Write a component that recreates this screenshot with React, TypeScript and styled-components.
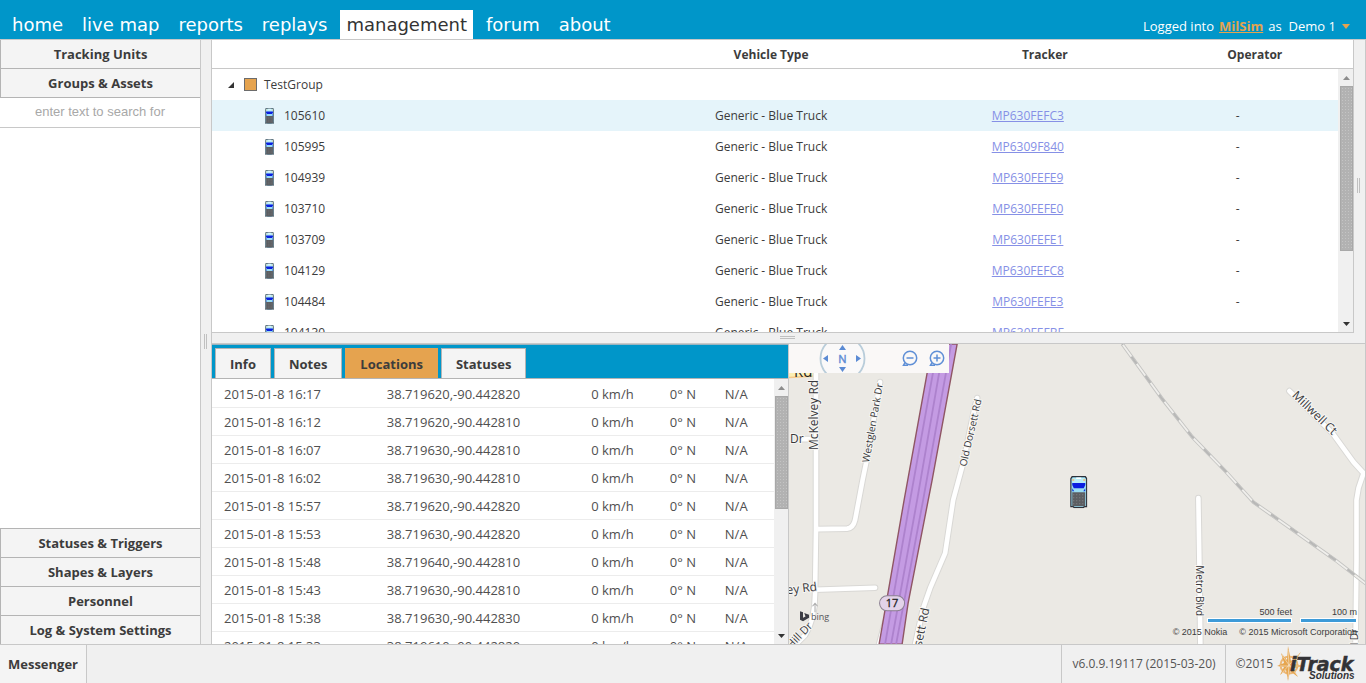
import React from "react";
import styled, { createGlobalStyle, css } from "styled-components";

const SANS = '"Open Sans", "Noto Sans", sans-serif';
const BLUE = "#0096c9";
const ORANGE = "#e5a34f";
const LINE = "#c8c8c8";
const INK = "#3c3c3c";

const GlobalStyle = createGlobalStyle`
  *, *::before, *::after { box-sizing: border-box; }
  body {
    margin: 0;
    background: #f0f0f0;
    color: ${INK};
    font: 12px/16px ${SANS};
  }
  button { font: inherit; color: inherit; cursor: pointer; }
`;

const Page = styled.div`
  display: grid;
  grid-template-rows: auto minmax(0, 1fr) auto;
  height: 100vh;
`;

/* ---------- top bar ---------- */

const TopBar = styled.header`
  display: flex;
  justify-content: space-between;
  align-items: flex-end;
  height: 40px;
  padding: 0 16px 0 6px;
  background: ${BLUE};
  border-bottom: 1px solid ${LINE};
`;

const Nav = styled.nav`
  display: flex;
  gap: 7px;
`;

const NavLink = styled.a<{ $active?: boolean }>`
  height: 29px;
  padding: 0 6px;
  font: 18px/29px "DejaVu Sans", Verdana, sans-serif;
  text-decoration: none;
  color: ${(p) => (p.$active ? "#333" : "#fff")};
  background: ${(p) => (p.$active ? "#fff" : "transparent")};
`;

const Account = styled.div`
  display: flex;
  align-items: center;
  gap: 5px;
  height: 26px;
  font-size: 13px;
  color: #fff;
`;

const AccountLink = styled.a`
  color: ${ORANGE};
  font-weight: 700;
`;

const UserMenu = styled.button`
  display: flex;
  align-items: center;
  gap: 6px;
  padding: 0 0 0 2px;
  border: 0;
  background: none;
  color: #fff;
`;

/* ---------- frame ---------- */

const Main = styled.main`
  display: grid;
  grid-template-columns: 201px 10px minmax(0, 1fr);
  min-height: 0;
`;

const Sidebar = styled.aside`
  display: flex;
  flex-direction: column;
  min-height: 0;
  background: #fff;
  border-right: 1px solid ${LINE};
`;

const SectionButton = styled.button<{ $line: "top" | "bottom" }>`
  height: 29px;
  padding: 0;
  border: 0 solid #b4b4b4;
  border-left-width: 1px;
  ${(p) => (p.$line === "top" ? "border-top-width: 1px;" : "border-bottom-width: 1px;")}
  background: #f4f4f4;
  font-weight: 700;
  font-size: 13px;
`;

const SearchBox = styled.input`
  width: 100%;
  height: 30px;
  padding: 0 0 2px;
  border: 0;
  border-bottom: 1px solid ${LINE};
  text-align: center;
  font: 13px "Liberation Sans", Arial, sans-serif;
  &::placeholder { color: #a8a8a8; opacity: 1; }
`;

const Spacer = styled.div`
  flex: 1;
`;

const Splitter = styled.div<{ $vertical?: boolean }>`
  display: flex;
  align-items: center;
  justify-content: center;
  padding: 0 2px 2px 0;
  background: #f0f0f0;
  &::before {
    content: "";
    border: 0 solid #c0c0c0;
    ${(p) =>
      p.$vertical
        ? css`width: 3px; height: 15px; border-width: 0 1px;`
        : css`width: 15px; height: 3px; border-width: 1px 0;`}
  }
`;

const Content = styled.div`
  display: grid;
  grid-template-rows: minmax(0, 293fr) 10px minmax(0, 301fr);
  min-height: 0;
  border: solid ${LINE};
  border-width: 0 1px;
`;

const TopPane = styled.div`
  display: grid;
  grid-template-columns: minmax(0, 1fr) 11px;
  min-height: 0;
`;

const BottomPane = styled.div`
  display: grid;
  grid-template-columns: minmax(0, 1fr) minmax(0, 1fr);
  min-height: 0;
  border-top: 1px solid ${LINE};
`;

/* ---------- scrollbar ---------- */

const Track = styled.div`
  display: flex;
  flex-direction: column;
  align-items: flex-end;
  background: #f0f0f0;
  min-height: 0;
`;

const Arrow = styled.button`
  display: grid;
  place-items: center;
  flex: none;
  width: 13px;
  height: 17px;
  padding: 0;
  border: 0;
  background: none;
`;

const ThumbArea = styled.div`
  flex: 1;
  width: 13px;
  min-height: 0;
`;

const Thumb = styled.div<{ $size: number }>`
  height: ${(p) => p.$size}%;
  background: radial-gradient(circle, #c4c4c4 1px, transparent 1px) 0 0 / 3px 3px #b2b2b2;
  border: 1px solid #a8a8a8;
`;

function ScrollBar({ size }: { size: number }) {
  return (
    <Track>
      <Arrow aria-label="Scroll up">
        <svg width="7" height="4"><path d="M0 4L3.5 0L7 4Z" fill="#8c8c8c" /></svg>
      </Arrow>
      <ThumbArea><Thumb $size={size} /></ThumbArea>
      <Arrow aria-label="Scroll down">
        <svg width="7" height="4"><path d="M0 0L3.5 4L7 0Z" fill="#333" /></svg>
      </Arrow>
    </Track>
  );
}

/* ---------- asset tree ---------- */

const TreePanel = styled.section`
  display: grid;
  grid-template-columns: minmax(0, 1fr) 15px;
  min-height: 0;
  background: #fff;
  border: solid ${LINE};
  border-width: 0 1px 1px 0;
`;

const TreeScroll = styled.div`
  overflow: hidden;
  min-height: 0;
`;

const TreeSide = styled.div`
  display: grid;
  grid-template-rows: 29px minmax(0, 1fr);
  min-height: 0;
  &::before {
    content: "";
    border-bottom: 1px solid ${LINE};
  }
`;

const TreeTable = styled.table`
  width: 100%;
  table-layout: fixed;
  border-collapse: separate;
  border-spacing: 0;
`;

const TreeHead = styled.th<{ $shift?: boolean }>`
  height: 29px;
  padding: 2px 0 0 ${(p) => (p.$shift ? 34 : 0)}px;
  border-bottom: 1px solid ${LINE};
  font-weight: 700;
`;

const TreeRow = styled.tr<{ $selected?: boolean }>`
  background: ${(p) => (p.$selected ? "#e5f4fa" : "#fff")};
`;

const TreeCell = styled.td`
  height: 31px;
  padding: 0;
  text-align: center;
`;

const NodeLabel = styled.div<{ $level: number }>`
  display: flex;
  align-items: center;
  gap: ${(p) => (p.$level ? 10 : 7)}px;
  padding-left: ${(p) => (p.$level ? 53 : 16)}px;
`;

const Expander = styled.button`
  display: flex;
  padding: 0 3px 0 0;
  border: 0;
  background: none;
`;

const Swatch = styled.span`
  width: 13px;
  height: 13px;
  background: ${ORANGE};
  border: 1px solid #6c6c6c;
`;

const TrackerLink = styled.a`
  color: #8690e6;
`;

function Truck({ width, height }: { width: number; height: number }) {
  return (
    <svg width={width} height={height} viewBox="0 0 17 32" preserveAspectRatio="none">
      <path d="M2 .5H15L16.5 2.5V30.5H14L13 31.5H4L3 30.5H.5V2.5Z" fill="#9adcf2" stroke="#2e3038" strokeWidth="1.4" />
      <path d="M3 2H14L15 4V7H2V4Z" fill="#b8edf8" />
      <path d="M6 1.5H11V3H6Z" fill="#fff" />
      <path d="M2 3H4V5H2ZM13 3H15V5H13Z" fill="#e8c48c" />
      <path d="M2 7H15V9L13.500 12H3.500L2 9Z" fill="#0a1ee0" />
      <path d="M2 12L4 15H2ZM15 12L13 15H15Z" fill="#1238d8" />
      <path d="M2 16H15V30H2Z" fill="#5c5e62" />
      <path d="M3 18.500H14M3 21.500H14M3 24.500H14M3 27.500H14" stroke="#85878b" strokeDasharray="1 2" />
    </svg>
  );
}

const assets = [
  ["105610", "MP630FEFC3"],
  ["105995", "MP6309F840"],
  ["104939", "MP630FEFE9"],
  ["103710", "MP630FEFE0"],
  ["103709", "MP630FEFE1"],
  ["104129", "MP630FEFC8"],
  ["104484", "MP630FEFE3"],
  ["104130", "MP630FEFBF"],
];

function AssetTree() {
  return (
    <TreePanel>
      <TreeScroll>
        <TreeTable>
          <colgroup>
            <col />
            <col style={{ width: "26.100%" }} />
            <col style={{ width: "19.500%" }} />
            <col style={{ width: "17.800%" }} />
          </colgroup>
          <thead>
            <tr>
              <TreeHead aria-label="Name" />
              <TreeHead>Vehicle Type</TreeHead>
              <TreeHead $shift>Tracker</TreeHead>
              <TreeHead $shift>Operator</TreeHead>
            </tr>
          </thead>
          <tbody>
            <TreeRow>
              <TreeCell colSpan={4}>
                <NodeLabel $level={0}>
                  <Expander aria-label="Collapse TestGroup">
                    <svg width="6" height="6"><path d="M6 0V6H0Z" fill="#333" /></svg>
                  </Expander>
                  <Swatch />
                  TestGroup
                </NodeLabel>
              </TreeCell>
            </TreeRow>
            {assets.map(([name, tracker], i) => (
              <TreeRow key={name} $selected={i === 0}>
                <TreeCell>
                  <NodeLabel $level={1}>
                    <Truck width={9} height={16} />
                    {name}
                  </NodeLabel>
                </TreeCell>
                <TreeCell>Generic - Blue Truck</TreeCell>
                <TreeCell><TrackerLink href="#tracker">{tracker}</TrackerLink></TreeCell>
                <TreeCell>-</TreeCell>
              </TreeRow>
            ))}
          </tbody>
        </TreeTable>
      </TreeScroll>
      <TreeSide>
        <ScrollBar size={72} />
      </TreeSide>
    </TreePanel>
  );
}

/* ---------- locations ---------- */

const DetailPanel = styled.section`
  display: grid;
  grid-template-rows: auto minmax(0, 1fr);
  min-height: 0;
  background: #fff;
  border-right: 1px solid ${LINE};
`;

const Tabs = styled.div`
  display: flex;
  align-items: flex-end;
  gap: 3px;
  height: 35px;
  padding-left: 3px;
  background: ${BLUE};
  border-top: 1px solid #9ab4c0;
  border-bottom: 1px solid #b4b4b4;
`;

const Tab = styled.button<{ $active?: boolean }>`
  height: 30px;
  padding: 0 14px;
  border: 1px solid ${(p) => (p.$active ? ORANGE : "#b4b4b4")};
  border-bottom: 0;
  background: ${(p) => (p.$active ? ORANGE : "#f4f4f4")};
  font-size: 13px;
  font-weight: 700;
`;

const LocationArea = styled.div`
  display: grid;
  grid-template-columns: minmax(0, 1fr) 14px;
  min-height: 0;
`;

const LocationScroll = styled.div`
  overflow: hidden;
`;

const LocationTable = styled.table`
  width: 100%;
  table-layout: fixed;
  border-collapse: collapse;
  color: #505050;
  font-size: 13px;
`;

const LocationCell = styled.td`
  height: 28px;
  padding: 2px 0 0 12px;
  border-bottom: 1px solid #ececec;
  white-space: nowrap;
`;

const locations = [
  ["16:17", "38.719620,-90.442820"],
  ["16:12", "38.719620,-90.442810"],
  ["16:07", "38.719630,-90.442810"],
  ["16:02", "38.719630,-90.442810"],
  ["15:57", "38.719620,-90.442820"],
  ["15:53", "38.719630,-90.442820"],
  ["15:48", "38.719640,-90.442810"],
  ["15:43", "38.719630,-90.442810"],
  ["15:38", "38.719630,-90.442830"],
  ["15:33", "38.719610,-90.442820"],
];

function Locations() {
  return (
    <DetailPanel>
      <Tabs role="tablist">
        <Tab role="tab">Info</Tab>
        <Tab role="tab">Notes</Tab>
        <Tab role="tab" aria-selected $active>Locations</Tab>
        <Tab role="tab">Statuses</Tab>
      </Tabs>
      <LocationArea>
        <LocationScroll>
          <LocationTable>
            <colgroup>
              <col style={{ width: "29%" }} />
              <col style={{ width: "36.400%" }} />
              <col style={{ width: "14%" }} />
              <col style={{ width: "9.800%" }} />
              <col />
            </colgroup>
            <tbody>
              {locations.map(([time, place]) => (
                <tr key={time}>
                  <LocationCell>2015-01-8 {time}</LocationCell>
                  <LocationCell>{place}</LocationCell>
                  <LocationCell>0 km/h</LocationCell>
                  <LocationCell>0° N</LocationCell>
                  <LocationCell>N/A</LocationCell>
                </tr>
              ))}
            </tbody>
          </LocationTable>
        </LocationScroll>
        <ScrollBar size={49} />
      </LocationArea>
    </DetailPanel>
  );
}

/* ---------- map ---------- */

const MapPanel = styled.section`
  position: relative;
  overflow: hidden;
  background: #ebe9e4;
`;

const MapDrawing = styled.svg`
  display: block;
  width: 100%;
  height: 100%;
  font-family: ${SANS};
`;

const MapTools = styled.div`
  position: absolute;
  top: 0;
  left: 0;
  width: 160px;
  height: 29px;
  overflow: hidden;
  background: #faf8f7;
`;

const MapCredits = styled.div`
  position: absolute;
  right: 8px;
  bottom: 6px;
  display: flex;
  flex-direction: column;
  align-items: flex-end;
  gap: 3px;
  font: 9px/12px "Liberation Sans", Arial, sans-serif;
`;

const Scales = styled.div`
  display: flex;
  gap: 8px;
`;

const Scale = styled.div<{ $width: number }>`
  width: ${(p) => p.$width}px;
  text-align: right;
  border-bottom: 5px solid #fff;
  position: relative;
  &::after {
    content: "";
    position: absolute;
    left: 1px;
    right: 1px;
    bottom: -4px;
    height: 3px;
    background: #3e9bd8;
  }
`;

const Notices = styled.div`
  display: flex;
  gap: 12px;
`;

const roads = [
  "M27 10L27 185L26 250Q26 275 16 291L5 302",
  "M28 185L58 184.500Q64 184 66 176L73.500 136L77 119L91 38",
  "M26 245.500L86 243.500",
  "M12 95L27 95",
  "M188 54L185 66L174 119L164 156L156 209L141 244L134 264L126 300",
  "M500 47L543 89L564 118L574 129L569 144L567 156L567 216L566 300",
  "M409 154L410 216L411 300",
  "M96 278L90 300",
];
const rail = "M333 0L373 55L403 93L436 127L464 158L501 184L546 216L577 240";

const halo = { stroke: "#f7f6f3", strokeWidth: 2, paintOrder: "stroke" as const, fill: "#38383c" };

function MapView() {
  return (
    <MapPanel>
      <MapDrawing viewBox="0 0 576 300" preserveAspectRatio="xMinYMin slice" role="img" aria-label="Road map">
        <rect width="576" height="300" fill="#ebe9e4" />
        <path d="M0 29H26V33L0 34Z" fill="#fbeeb4" />
        <path d="M0 33.500L26 32" stroke="#f5c98c" strokeWidth="1.500" />
        {roads.map((d) => (
          <path key={d} d={d} fill="none" stroke="#d9d8d5" strokeWidth="6.600" strokeLinecap="round" strokeLinejoin="round" />
        ))}
        {roads.map((d) => (
          <path key={d} d={d} fill="none" stroke="#fff" strokeWidth="4.600" strokeLinecap="round" strokeLinejoin="round" />
        ))}
        <path d={rail} fill="none" stroke="#c4c4c2" strokeWidth="3.600" />
        <path d={rail} fill="none" stroke="#f0efec" strokeWidth="1.800" />
        <path d={rail} fill="none" stroke="#b8b8b7" strokeWidth="2.200" strokeDasharray="9 14.500" strokeDashoffset="8" />
        <path d="M143 0L138 29L115 156L90 300H113L119 259L143 136L168 0Z" fill="#c49be3" stroke="#8f5664" strokeWidth="1.400" />
        <path d="M149 0L121 156L96 300M155 0L128 156L102 300M162 0L134 156L107 300" fill="none" stroke="#ad82cd" strokeWidth="1.800" />
        <text x="5" y="33" fontSize="15" fill="#222">Rd</text>
        <text transform="translate(29 106) rotate(-90)" fontSize="12" {...halo}>McKelvey Rd</text>
        <text transform="translate(80 119) rotate(-80)" fontSize="10" {...halo}>Westglen Park Dr</text>
        <text transform="translate(177 123) rotate(-77)" fontSize="10" {...halo}>Old Dorsett Rd</text>
        <text transform="translate(128 323) rotate(-78)" fontSize="12" {...halo}>Dorsett Rd</text>
        <text transform="translate(502 52) rotate(44)" fontSize="12" {...halo}>Millwell Ct</text>
        <text transform="translate(407 221) rotate(90)" fontSize="10" {...halo}>Metro Blvd</text>
        <text transform="translate(569 301) rotate(-90)" fontSize="10" {...halo}>l Dr</text>
        <text x="1" y="99" fontSize="12" {...halo}>Dr</text>
        <text transform="translate(-2 250) rotate(-7)" fontSize="12" {...halo}>ey Rd</text>
        <text transform="translate(2 305) rotate(-46)" fontSize="11" {...halo}>Hill Dr</text>
        <path d="M26 268V259M23.500 262L26 259L28.500 262" fill="none" stroke="#aaa" />
        <rect x="90.500" y="251.500" width="25" height="15" rx="7.500" fill="#e3d3e9" stroke="#8a7f90" />
        <text x="103" y="263" fontSize="11" textAnchor="middle" fill="#222" stroke="#222" strokeWidth=".3">17</text>
        <path d="M11 267L14 268V273.500L16.500 272.200L15.200 268.800L20 270.500V273.500L14 277L11 275.500Z" fill="#3c3c44" />
        <text x="22" y="276" fontSize="9" fill="#55555a">bing</text>
        <svg x="281" y="132" width="17" height="32"><Truck width={17} height={32} /></svg>
      </MapDrawing>
      <MapTools>
        <svg width="160" height="29" fontFamily={SANS}>
          <circle cx="53.500" cy="14.500" r="22" fill="#faf9f9" stroke="#b9cdda" strokeWidth="1.800" />
          <g fill="#5b8bd4">
            <path d="M50 6L53.500 1L57 6ZM50 23L53.500 28L57 23ZM39 11L34 14.500L39 18ZM67 11L72 14.500L67 18Z" />
            <text x="53.500" y="19" fontSize="11" textAnchor="middle" stroke="#5b8bd4" strokeWidth=".4">N</text>
          </g>
          <g fill="none" stroke="#5f8fd6" strokeWidth="1.500">
            <circle cx="121" cy="14" r="6.700" />
            <path d="M117.500 14H124.500M116 18.500L114.500 21.200H119" />
            <circle cx="148" cy="14" r="6.700" />
            <path d="M144.500 14H151.500M148 10.500V17.500M143 18.500L141.500 21.200H146" />
          </g>
        </svg>
      </MapTools>
      <MapCredits>
        <Scales>
          <Scale $width={85}>500 feet</Scale>
          <Scale $width={57}>100 m</Scale>
        </Scales>
        <Notices>
          <span>© 2015 Nokia</span>
          <span>© 2015 Microsoft Corporation</span>
        </Notices>
      </MapCredits>
    </MapPanel>
  );
}

/* ---------- footer ---------- */

const Footer = styled.footer`
  display: flex;
  height: 39px;
  border-top: 1px solid ${LINE};
  background: #f0f0f0;
`;

const Messenger = styled.button`
  padding: 0 8px;
  border: 0;
  border-right: 1px solid ${LINE};
  background: #f4f4f4;
  font-size: 13px;
  font-weight: 700;
`;

const FooterItem = styled.div`
  display: flex;
  align-items: center;
  gap: 4px;
  padding: 0 9px 0 10px;
  border-left: 1px solid ${LINE};
  color: #555;
`;

function Logo() {
  return (
    <svg width="80" height="37" role="img" aria-label="iTrack Solutions">
      <circle cx="12" cy="19" r="8.500" fill="none" stroke="#ecb878" strokeWidth="2" />
      <g fill="#e6a650">
        <path d="M11 0L14 15L24 6L16 18L29 20L16 22L21 31L13 25L11 35L9 24L3 29L7 21L0 20L7 17L4 7L10 14Z" />
      </g>
      <path d="M11 4L12 19L22 8M5 27L12 19L11 32M5 9L12 19L20 29M3 20H26" fill="none" stroke="#f6ead6" strokeWidth=".6" />
      <text x="13" y="25" fontFamily="DejaVu Sans, sans-serif" fontSize="19" fontWeight="700" fontStyle="italic" fill="#333336" stroke="#333336" strokeWidth=".5">iTrack</text>
      <text x="32" y="33" fontFamily="Liberation Sans, sans-serif" fontSize="10" fontWeight="700" fontStyle="italic" fill="#333336">Solutions</text>
    </svg>
  );
}

const sections = {
  upper: ["Tracking Units", "Groups & Assets"],
  lower: ["Statuses & Triggers", "Shapes & Layers", "Personnel", "Log & System Settings"],
};
const pages = ["home", "live map", "reports", "replays", "management", "forum", "about"];

export default function App() {
  return (
    <Page>
      <GlobalStyle />
      <TopBar>
        <Nav>
          {pages.map((p) => (
            <NavLink key={p} href={`#${p}`} $active={p === "management"}>{p}</NavLink>
          ))}
        </Nav>
        <Account>
          Logged into <AccountLink href="#milsim">MilSim</AccountLink> as
          <UserMenu>
            Demo 1
            <svg width="8" height="5"><path d="M0 0H8L4 5Z" fill={ORANGE} /></svg>
          </UserMenu>
        </Account>
      </TopBar>
      <Main>
        <Sidebar>
          {sections.upper.map((s) => (
            <SectionButton key={s} $line="bottom">{s}</SectionButton>
          ))}
          <SearchBox aria-label="Search assets" placeholder="enter text to search for" />
          <Spacer />
          {sections.lower.map((s) => (
            <SectionButton key={s} $line="top">{s}</SectionButton>
          ))}
        </Sidebar>
        <Splitter $vertical />
        <Content>
          <TopPane>
            <AssetTree />
            <Splitter $vertical />
          </TopPane>
          <Splitter />
          <BottomPane>
            <Locations />
            <MapView />
          </BottomPane>
        </Content>
      </Main>
      <Footer>
        <Messenger>Messenger</Messenger>
        <Spacer />
        <FooterItem>v6.0.9.19117 (2015-03-20)</FooterItem>
        <FooterItem>
          ©2015
          <Logo />
        </FooterItem>
      </Footer>
    </Page>
  );
}
